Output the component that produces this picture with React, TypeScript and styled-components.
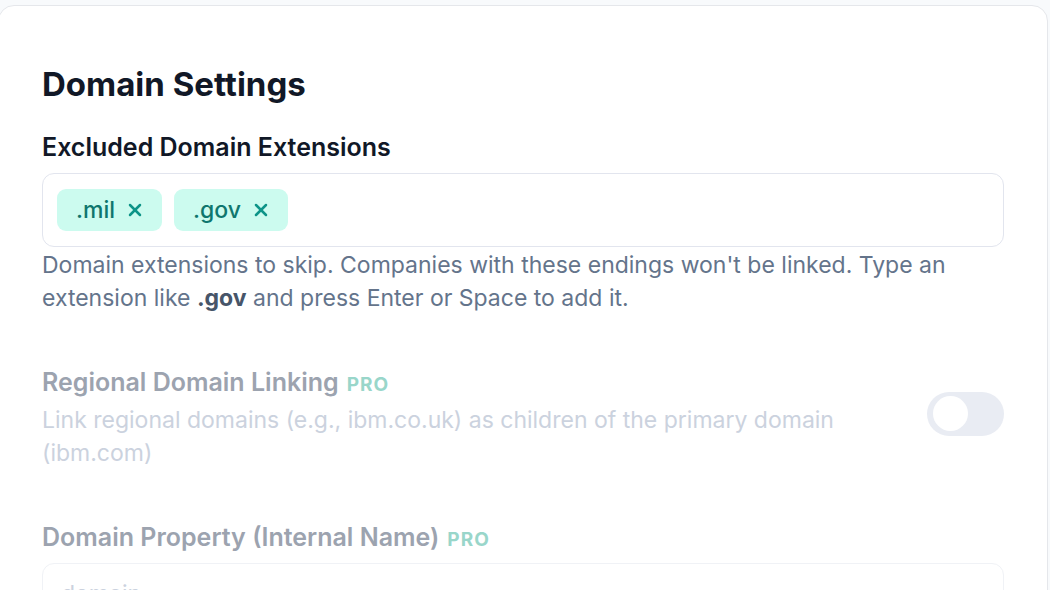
import styled, { createGlobalStyle } from "styled-components";
import { X } from "lucide-react";

const GlobalStyle = createGlobalStyle`
  html, body {
    margin: 0;
    padding: 0;
    background: #f8fafc;
    overflow: hidden;
  }
  body {
    font-family: Inter, "Noto Sans", sans-serif;
    font-optical-sizing: none;
    -webkit-font-smoothing: antialiased;
  }
`;

const Page = styled.div`
  padding-top: 5px;
  width: 1050px;
  height: 590px;
  overflow: hidden;
`;

const Card = styled.section`
  margin-left: -2px;
  width: 1050px;
  box-sizing: border-box;
  min-height: 700px;
  background: #fff;
  border: 1px solid #e5e7eb;
  border-radius: 16px;
  padding: 56px 43px 0;
`;

const Title = styled.h2`
  margin: 0 0 22px;
  font-size: 33px;
  line-height: 44px;
  font-weight: 700;
  color: #111827;
`;

const Field = styled.div`
  display: flex;
  flex-direction: column;
  margin-bottom: 48px;
`;

const Label = styled.label<{ $disabled?: boolean }>`
  font-size: 25px;
  line-height: 38px;
  font-weight: 600;
  color: ${(p) => (p.$disabled ? "#9ca3af" : "#111827")};
  margin-bottom: ${(p) => (p.$disabled ? "4px" : "7px")};
`;

const Pro = styled.span`
  font-size: 19px;
  font-weight: 700;
  letter-spacing: 1px;
  color: #99d6ca;
  margin-left: 8px;
`;

const TagBox = styled.div`
  display: flex;
  align-items: center;
  gap: 12px;
  border: 1px solid #e2e5ee;
  border-radius: 12px;
  padding: 15px 14px;
`;

const Chip = styled.span`
  display: inline-flex;
  align-items: center;
  gap: 10px;
  height: 42px;
  padding: 0 17px 0 19px;
  border-radius: 9px;
  background: #ccfbef;
  color: #0f766e;
  font-size: 23px;
  font-weight: 500;

  svg {
    color: #0d9488;
  }
`;

const Help = styled.p`
  margin: 2px 0 0;
  font-size: 23px;
  line-height: 33px;
  color: #64748b;

  b {
    color: #475569;
    font-weight: 700;
  }
`;

const ToggleRow = styled.div`
  display: flex;
  align-items: center;
  gap: 24px;
`;

const ToggleText = styled.div`
  flex: 1;
  display: flex;
  flex-direction: column;
`;

const Desc = styled.p`
  margin: 0;
  font-size: 23px;
  line-height: 33px;
  color: #cbd2de;
`;

const Toggle = styled.span`
  flex: none;
  width: 77px;
  height: 44px;
  border-radius: 22px;
  background: #e9ecf3;
  display: flex;
  align-items: center;
  padding: 0 6px;
  box-sizing: border-box;
  margin-top: -6px;

  &::before {
    content: "";
    width: 35px;
    height: 35px;
    border-radius: 50%;
    background: #fff;
  }
`;

const TextInput = styled.div`
  border: 1px solid #f0f2f6;
  border-radius: 12px;
  height: 74px;
  box-sizing: border-box;
  padding: 14px 18px 0;
  font-size: 23px;
  line-height: 33px;
  color: #cbd2de;
`;

export default function App() {
  return (
    <Page>
      <GlobalStyle />
      <Card>
        <Title>Domain Settings</Title>

        <Field>
          <Label>Excluded Domain Extensions</Label>
          <TagBox>
            {[".mil", ".gov"].map((t) => (
              <Chip key={t}>
                {t}
                <X size={20} strokeWidth={3} />
              </Chip>
            ))}
          </TagBox>
          <Help>
            Domain extensions to skip. Companies with these endings won't be linked. Type an
            extension like <b>.gov</b> and press Enter or Space to add it.
          </Help>
        </Field>

        <Field>
          <ToggleRow>
            <ToggleText>
              <Label $disabled as="span" style={{ marginBottom: 0 }}>
                Regional Domain Linking<Pro>PRO</Pro>
              </Label>
              <Desc>
                Link regional domains (e.g., ibm.co.uk) as children of the primary domain
                (ibm.com)
              </Desc>
            </ToggleText>
            <Toggle />
          </ToggleRow>
        </Field>

        <Field>
          <Label $disabled>
            Domain Property (Internal Name)<Pro>PRO</Pro>
          </Label>
          <TextInput>domain</TextInput>
        </Field>
      </Card>
    </Page>
  );
}
